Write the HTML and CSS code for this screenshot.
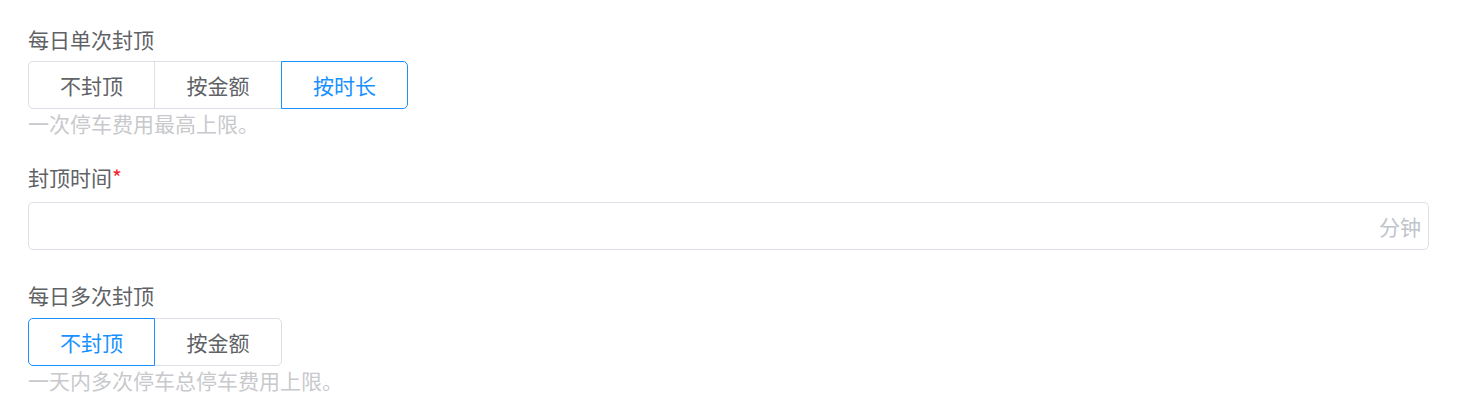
FILE: index.html
```html
<!DOCTYPE html>
<html lang="zh">
<head>
<meta charset="utf-8">
<link rel="stylesheet" href="styles.css">
</head>
<body>
<div class="form">
  <div class="item item-first">
    <div class="label">每日单次封顶</div>
    <div class="group">
      <button class="btn">不封顶</button>
      <button class="btn">按金额</button>
      <button class="btn active">按时长</button>
    </div>
    <div class="hint">一次停车费用最高上限。</div>
  </div>
  <div class="item item-second">
    <div class="label label-req">封顶时间<span class="req">*</span></div>
    <div class="input">
      <span class="suffix">分钟</span>
    </div>
  </div>
  <div class="item item-third">
    <div class="label">每日多次封顶</div>
    <div class="group">
      <button class="btn active">不封顶</button>
      <button class="btn">按金额</button>
    </div>
    <div class="hint">一天内多次停车总停车费用上限。</div>
  </div>
</div>
</body>
</html>
```
FILE: styles.css
```css
html, body {
  margin: 0;
  padding: 0;
  background: #ffffff;
}
body {
  font-family: "Noto Sans CJK SC", "Noto Sans", sans-serif;
  font-size: 21px;
  color: #606266;
}
.form {
  padding: 24px 37px 0 28px;
}
.label {
  line-height: 30px;
  height: 30px;
  color: #606266;
}
.req {
  color: #f5222d;
}
.item-first .label { margin-bottom: 7px; }
.item-second { margin-top: 25px; }
.item-second .label { margin-bottom: 10px; }
.item-third { margin-top: 30px; }
.item-third .label { margin-bottom: 8px; }
.group {
  display: flex;
}
.btn {
  position: relative;
  width: 127px;
  height: 48px;
  margin: 0 0 0 -1px;
  padding: 0;
  border: 1px solid #dcdfe6;
  background: #ffffff;
  font-family: inherit;
  font-size: 21px;
  color: #606266;
  border-radius: 0;
  cursor: pointer;
}
.btn:nth-child(2) {
  width: 128px;
}
.btn:first-child {
  margin-left: 0;
  border-radius: 5px 0 0 5px;
}
.btn:last-child {
  border-radius: 0 5px 5px 0;
}
.btn.active {
  border-color: #1890ff;
  color: #1890ff;
  z-index: 1;
}
.hint {
  line-height: 28px;
  color: #c8c9cc;
}
.input {
  box-sizing: border-box;
  height: 48px;
  width: 1401px;
  border: 1px solid #dcdfe6;
  border-radius: 5px;
  display: flex;
  align-items: center;
  justify-content: flex-end;
  padding-right: 7px;
}
.suffix {
  color: #c0c4cc;
  font-size: 21px;
}
```
